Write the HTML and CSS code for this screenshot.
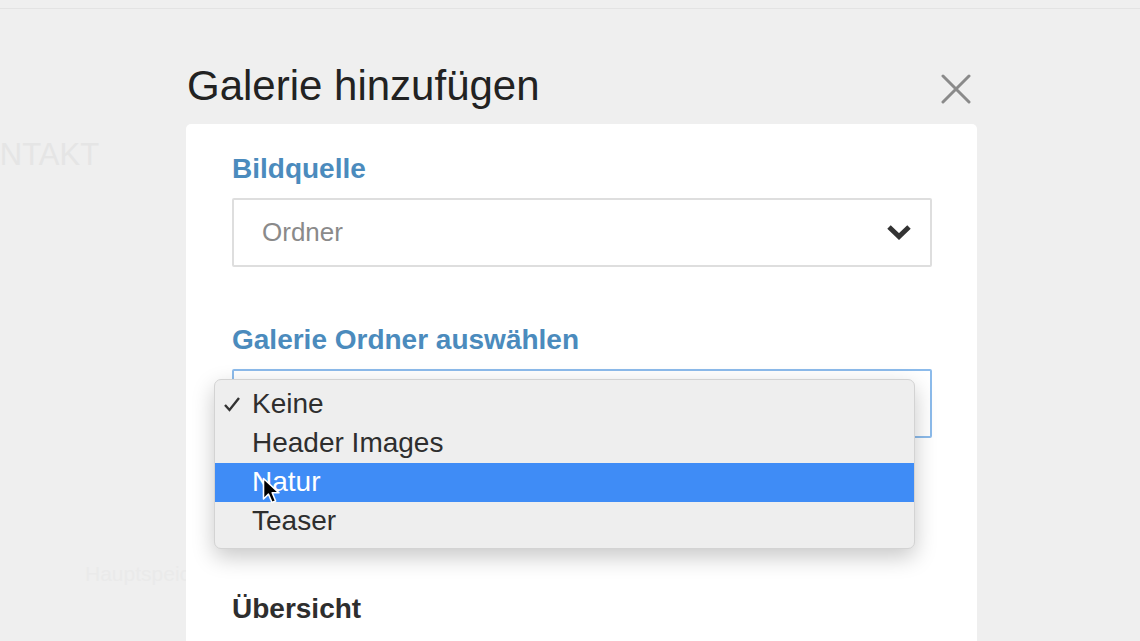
FILE: index.html
```html
<!DOCTYPE html>
<html>
<head>
  <title>Galerie hinzufügen</title>
  <link rel="stylesheet" href="styles.css">
</head>
<body>
  <div class="backdrop">
    <div class="bg-line"></div>
    <div class="bg-nav">KONTAKT</div>
    <div class="bg-hint">Hauptspeicher</div>
  </div>

  <div class="modal">
    <div class="modal-head">
      <h1>Galerie hinzufügen</h1>
      <button class="close" aria-label="Schließen">
        <svg width="30" height="30" viewBox="0 0 30 30"><path d="M2 2 L28 28 M28 2 L2 28" stroke="#8a8a8a" stroke-width="3" stroke-linecap="round" fill="none"/></svg>
      </button>
    </div>

    <div class="card">
      <div class="field">
        <label>Bildquelle</label>
        <div class="select">
          <span class="placeholder">Ordner</span>
          <svg class="chevron" width="26" height="16" viewBox="0 0 26 16"><path d="M3 3 L13 12.5 L23 3" stroke="#333" stroke-width="5" fill="none" stroke-linejoin="miter"/></svg>
        </div>
      </div>

      <div class="field field-last">
        <label>Galerie Ordner auswählen</label>
        <div class="select-wrap">
          <div class="select focused"></div>
          <ul class="menu">
            <li class="checked">
              <svg class="check" width="18" height="16" viewBox="0 0 18 16"><path d="M2 9 L6.5 14 L16 2" stroke="#333" stroke-width="2.4" fill="none"/></svg>
              Keine
            </li>
            <li>Header Images</li>
            <li class="active">Natur</li>
            <li>Teaser</li>
          </ul>
          <svg class="cursor" width="22" height="30" viewBox="0 0 22 30"><path d="M1.5 1.5 L1.5 22 L6.5 17.2 L10 25.5 L13.6 24 L10.2 15.8 L17 15.8 Z" fill="#000" stroke="#fff" stroke-width="1.6" stroke-linejoin="round"/></svg>
        </div>
      </div>

      <h2>Übersicht</h2>
    </div>
  </div>
</body>
</html>
```

FILE: styles.css
```css
html, body { height: 100%; }
body {
  margin: 0;
  background-color: #efefef;
  font-family: "Liberation Sans", Arial, Helvetica, sans-serif;
  overflow: hidden;
  position: relative;
}

/* faded page behind the modal */
.backdrop { position: absolute; top: 0; left: 0; right: 0; bottom: 0; }
.bg-line { height: 8px; border-bottom: 1px solid #e3e3e3; }
.bg-nav {
  position: absolute;
  top: 137px;
  left: -45px;
  font-size: 31px;
  color: #e5e5e5;
}
.bg-hint {
  position: absolute;
  top: 562px;
  left: 85px;
  font-size: 21px;
  color: #eaeaea;
}

.modal {
  position: relative;
  width: 791px;
  margin-left: 186px;
  padding-top: 61px;
}
.modal-head {
  display: flex;
  justify-content: space-between;
  align-items: center;
  margin-bottom: 13px;
}
.modal-head h1 {
  margin: 0 0 0 1px;
  font-size: 42px;
  font-weight: normal;
  line-height: 1.2;
  color: #222;
}
.close {
  background: none;
  border: none;
  padding: 0;
  margin: 5px 6px 0 0;
  width: 30px;
  height: 30px;
  cursor: pointer;
}

.card {
  background-color: #fff;
  border-radius: 5px;
  padding: 28px 45px 0 46px;
  height: 600px;
}
.field { margin-bottom: 56px; }
.field-last { margin-bottom: 154px; }
.field label {
  display: block;
  font-size: 28px;
  font-weight: bold;
  line-height: 1.2;
  color: #4b8bbd;
  margin-bottom: 12px;
}
.select {
  height: 65px;
  border: 2px solid #dedede;
  border-radius: 2px;
  display: flex;
  align-items: center;
  justify-content: space-between;
  padding: 0 18px 0 28px;
}
.select.focused { border-color: #8cbbeb; }
.placeholder { font-size: 26px; color: #8a8a8a; }

.select-wrap { position: relative; }
.menu {
  position: absolute;
  top: 10px;
  left: -18px;
  width: 701px;
  box-sizing: border-box;
  margin: 0;
  padding: 5px 0 7px;
  list-style: none;
  background-color: #eeeeee;
  border: 1px solid #d3d3d3;
  border-radius: 7px;
  box-shadow: 0 8px 22px rgba(0,0,0,0.22);
}
.menu li {
  position: relative;
  height: 39px;
  line-height: 37px;
  padding-left: 37px;
  font-size: 28px;
  color: #2e2e2e;
}
.menu li.active { background-color: #3f8cf6; color: #fff; }
.check { position: absolute; left: 8px; top: 11px; }
.cursor { position: absolute; left: 30px; top: 108px; }

.card h2 {
  margin: 0;
  font-size: 28px;
  font-weight: bold;
  line-height: 1.2;
  color: #2e2e2e;
}
```
